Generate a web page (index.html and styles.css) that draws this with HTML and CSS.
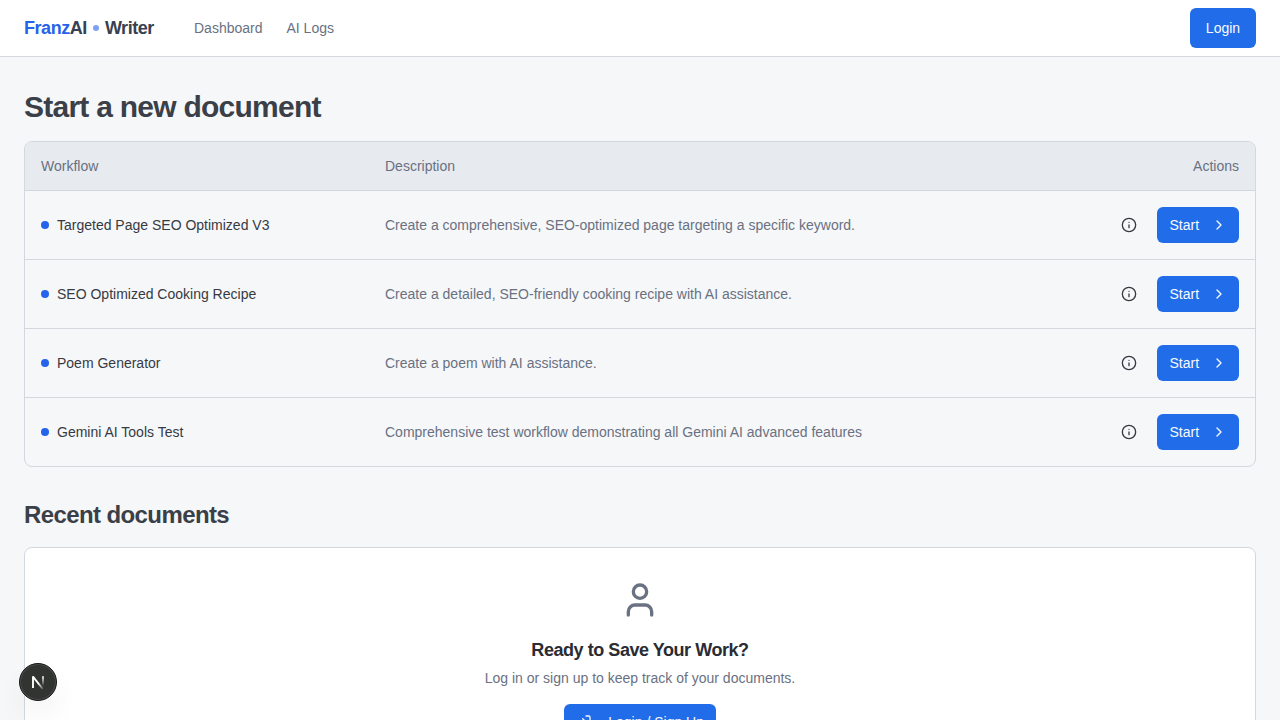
FILE: index.html
```html
<!DOCTYPE html>
<html lang="en">
<head>
<meta charset="utf-8">
<title>FranzAI Writer</title>
<link rel="stylesheet" href="styles.css">
</head>
<body>
<header class="header">
  <a class="logo"><span class="logo-accent">Franz</span><span class="logo-ai">AI</span><span class="logo-dot"></span><span class="logo-writer">Writer</span></a>
  <nav class="nav"><a class="nav-dashboard">Dashboard</a><a class="nav-logs">AI Logs</a></nav>
  <button class="btn login">Login</button>
</header>
<main class="main">
  <h1 class="title">Start a new document</h1>
  <section class="table">
    <div class="row head"><span>Workflow</span><span>Description</span><span class="head-actions">Actions</span></div>
    <div class="row">
      <div class="name"><i class="dot"></i><span>Targeted Page SEO Optimized V3</span></div>
      <div class="desc">Create a comprehensive, SEO-optimized page targeting a specific keyword.</div>
      <div class="actions"><svg class="icon info" viewBox="0 0 24 24"><circle cx="12" cy="12" r="10"/><path d="M12 16v-4M12 8h.01"/></svg><button class="btn start">Start<svg class="icon" viewBox="0 0 24 24"><path d="m9 18 6-6-6-6"/></svg></button></div>
    </div>
    <div class="row">
      <div class="name"><i class="dot"></i><span>SEO Optimized Cooking Recipe</span></div>
      <div class="desc">Create a detailed, SEO-friendly cooking recipe with AI assistance.</div>
      <div class="actions"><svg class="icon info" viewBox="0 0 24 24"><circle cx="12" cy="12" r="10"/><path d="M12 16v-4M12 8h.01"/></svg><button class="btn start">Start<svg class="icon" viewBox="0 0 24 24"><path d="m9 18 6-6-6-6"/></svg></button></div>
    </div>
    <div class="row">
      <div class="name"><i class="dot"></i><span>Poem Generator</span></div>
      <div class="desc">Create a poem with AI assistance.</div>
      <div class="actions"><svg class="icon info" viewBox="0 0 24 24"><circle cx="12" cy="12" r="10"/><path d="M12 16v-4M12 8h.01"/></svg><button class="btn start">Start<svg class="icon" viewBox="0 0 24 24"><path d="m9 18 6-6-6-6"/></svg></button></div>
    </div>
    <div class="row">
      <div class="name"><i class="dot"></i><span>Gemini AI Tools Test</span></div>
      <div class="desc">Comprehensive test workflow demonstrating all Gemini AI advanced features</div>
      <div class="actions"><svg class="icon info" viewBox="0 0 24 24"><circle cx="12" cy="12" r="10"/><path d="M12 16v-4M12 8h.01"/></svg><button class="btn start">Start<svg class="icon" viewBox="0 0 24 24"><path d="m9 18 6-6-6-6"/></svg></button></div>
    </div>
  </section>
  <h2 class="subtitle">Recent documents</h2>
  <section class="card">
    <svg class="icon user" viewBox="0 0 24 24"><path d="M19 21v-2a4 4 0 0 0-4-4H9a4 4 0 0 0-4 4v2"/><circle cx="12" cy="7" r="4"/></svg>
    <h3 class="card-title">Ready to Save Your Work?</h3>
    <p class="card-text">Log in or sign up to keep track of your documents.</p>
    <button class="btn signup"><svg class="icon" viewBox="0 0 24 24"><path d="M15 3h4a2 2 0 0 1 2 2v14a2 2 0 0 1-2 2h-4M10 17l5-5-5-5M15 12H3"/></svg>Login / Sign Up</button>
  </section>
</main>
<div class="badge">
  <svg class="badge-mark" viewBox="0 0 36 36" fill="none">
    <defs>
      <linearGradient id="diag" x1="19" y1="19" x2="24.5" y2="25.5" gradientUnits="userSpaceOnUse"><stop stop-color="#fff"/><stop offset="1" stop-color="#fff" stop-opacity="0"/></linearGradient>
      <linearGradient id="stem" x1="23" y1="12" x2="23" y2="22" gradientUnits="userSpaceOnUse"><stop stop-color="#fff"/><stop offset="1" stop-color="#fff" stop-opacity="0"/></linearGradient>
    </defs>
    <path d="M13 12.6L22.8 25" stroke="url(#diag)" stroke-width="1.9"/>
    <path d="M13 24V12.2" stroke="#fff" stroke-width="1.9"/>
    <path d="M23 12.2V23" stroke="url(#stem)" stroke-width="1.8"/>
  </svg>
</div>
</body>
</html>
```
FILE: styles.css
```css
* { box-sizing: border-box; }
body {
  margin: 0;
  height: 720px;
  overflow: hidden;
  background: #f6f7f9;
  color: #363a43;
  font: 14px/20px "Liberation Sans", Arial, sans-serif;
}
h1, h2, h3, p { margin: 0; }
.header {
  display: flex;
  align-items: center;
  height: 57px;
  padding: 0 24px;
  background: #fff;
  border-bottom: 1px solid #d3d7de;
}
.logo {
  display: flex;
  align-items: center;
  width: 130px;
  font-size: 18px;
  line-height: 28px;
  font-weight: 700;
  letter-spacing: -0.45px;
  color: #374151;
}
.logo-accent { color: #2563eb; }
.logo-dot {
  width: 6px;
  height: 6px;
  margin: 0 6px;
  border-radius: 50%;
  background: #7ca1f5;
}
.nav {
  display: flex;
  gap: 24px;
  margin-left: 40px;
  color: #697182;
}
.btn {
  display: flex;
  align-items: center;
  justify-content: center;
  border: 0;
  border-radius: 6px;
  background: #206ce9;
  color: #f8fafc;
  font: inherit;
  white-space: nowrap;
}
.login { width: 66px; height: 40px; margin-left: auto; padding: 0; }
.main { padding: 32px 24px 0; }
.title {
  margin-bottom: 16px;
  font-size: 30px;
  line-height: 36px;
  letter-spacing: -0.75px;
  color: #3a3f48;
}
.table {
  overflow: hidden;
  border: 1px solid #d3d7de;
  border-radius: 8px;
}
.row {
  display: grid;
  grid-template-columns: 344px 1fr 150px;
  align-items: center;
  height: 69px;
  padding: 0 16px;
  border-bottom: 1px solid #d3d7de;
}
.row:last-child { height: 68px; border-bottom: 0; }
.head { height: 49px; background: #e7eaef; color: #697182; }
.head-actions { text-align: right; }
.name { display: flex; align-items: center; gap: 8px; }
.dot { width: 8px; height: 8px; border-radius: 50%; background: #2563eb; }
.desc { color: #697182; }
.actions { display: flex; align-items: center; justify-content: flex-end; gap: 20px; }
.icon {
  width: 16px;
  height: 16px;
  flex: none;
  fill: none;
  stroke: currentColor;
  stroke-width: 2;
  stroke-linecap: round;
  stroke-linejoin: round;
}
.start { width: 82px; height: 36px; padding: 0 12px 0 12.5px; justify-content: space-between; }
.subtitle {
  margin: 32px 0 16px;
  font-size: 24px;
  line-height: 32px;
  letter-spacing: -0.6px;
  color: #3a3f48;
}
.card {
  display: flex;
  flex-direction: column;
  align-items: center;
  padding: 32px 24px;
  background: #fff;
  border: 1px solid #d3d7de;
  border-radius: 8px;
}
.user { width: 40px; height: 40px; color: #697182; }
.card-title {
  margin-top: 16px;
  font-size: 18px;
  line-height: 28px;
  letter-spacing: -0.45px;
  color: #292c33;
}
.card-text { margin-top: 4px; color: #697182; }
.signup { width: 152px; height: 36px; margin-top: 16px; padding: 0 12px; justify-content: space-between; }
.badge {
  position: fixed;
  left: 19px;
  top: 663px;
  width: 38px;
  height: 38px;
  border: 1px solid #171717;
  border-radius: 50%;
  background: #323432;
  box-shadow: inset 0 0 0 1px #4c4c4c, 0 16px 32px -8px rgba(0, 0, 0, 0.14);
}
.badge-mark { display: block; width: 36px; height: 36px; }
```
